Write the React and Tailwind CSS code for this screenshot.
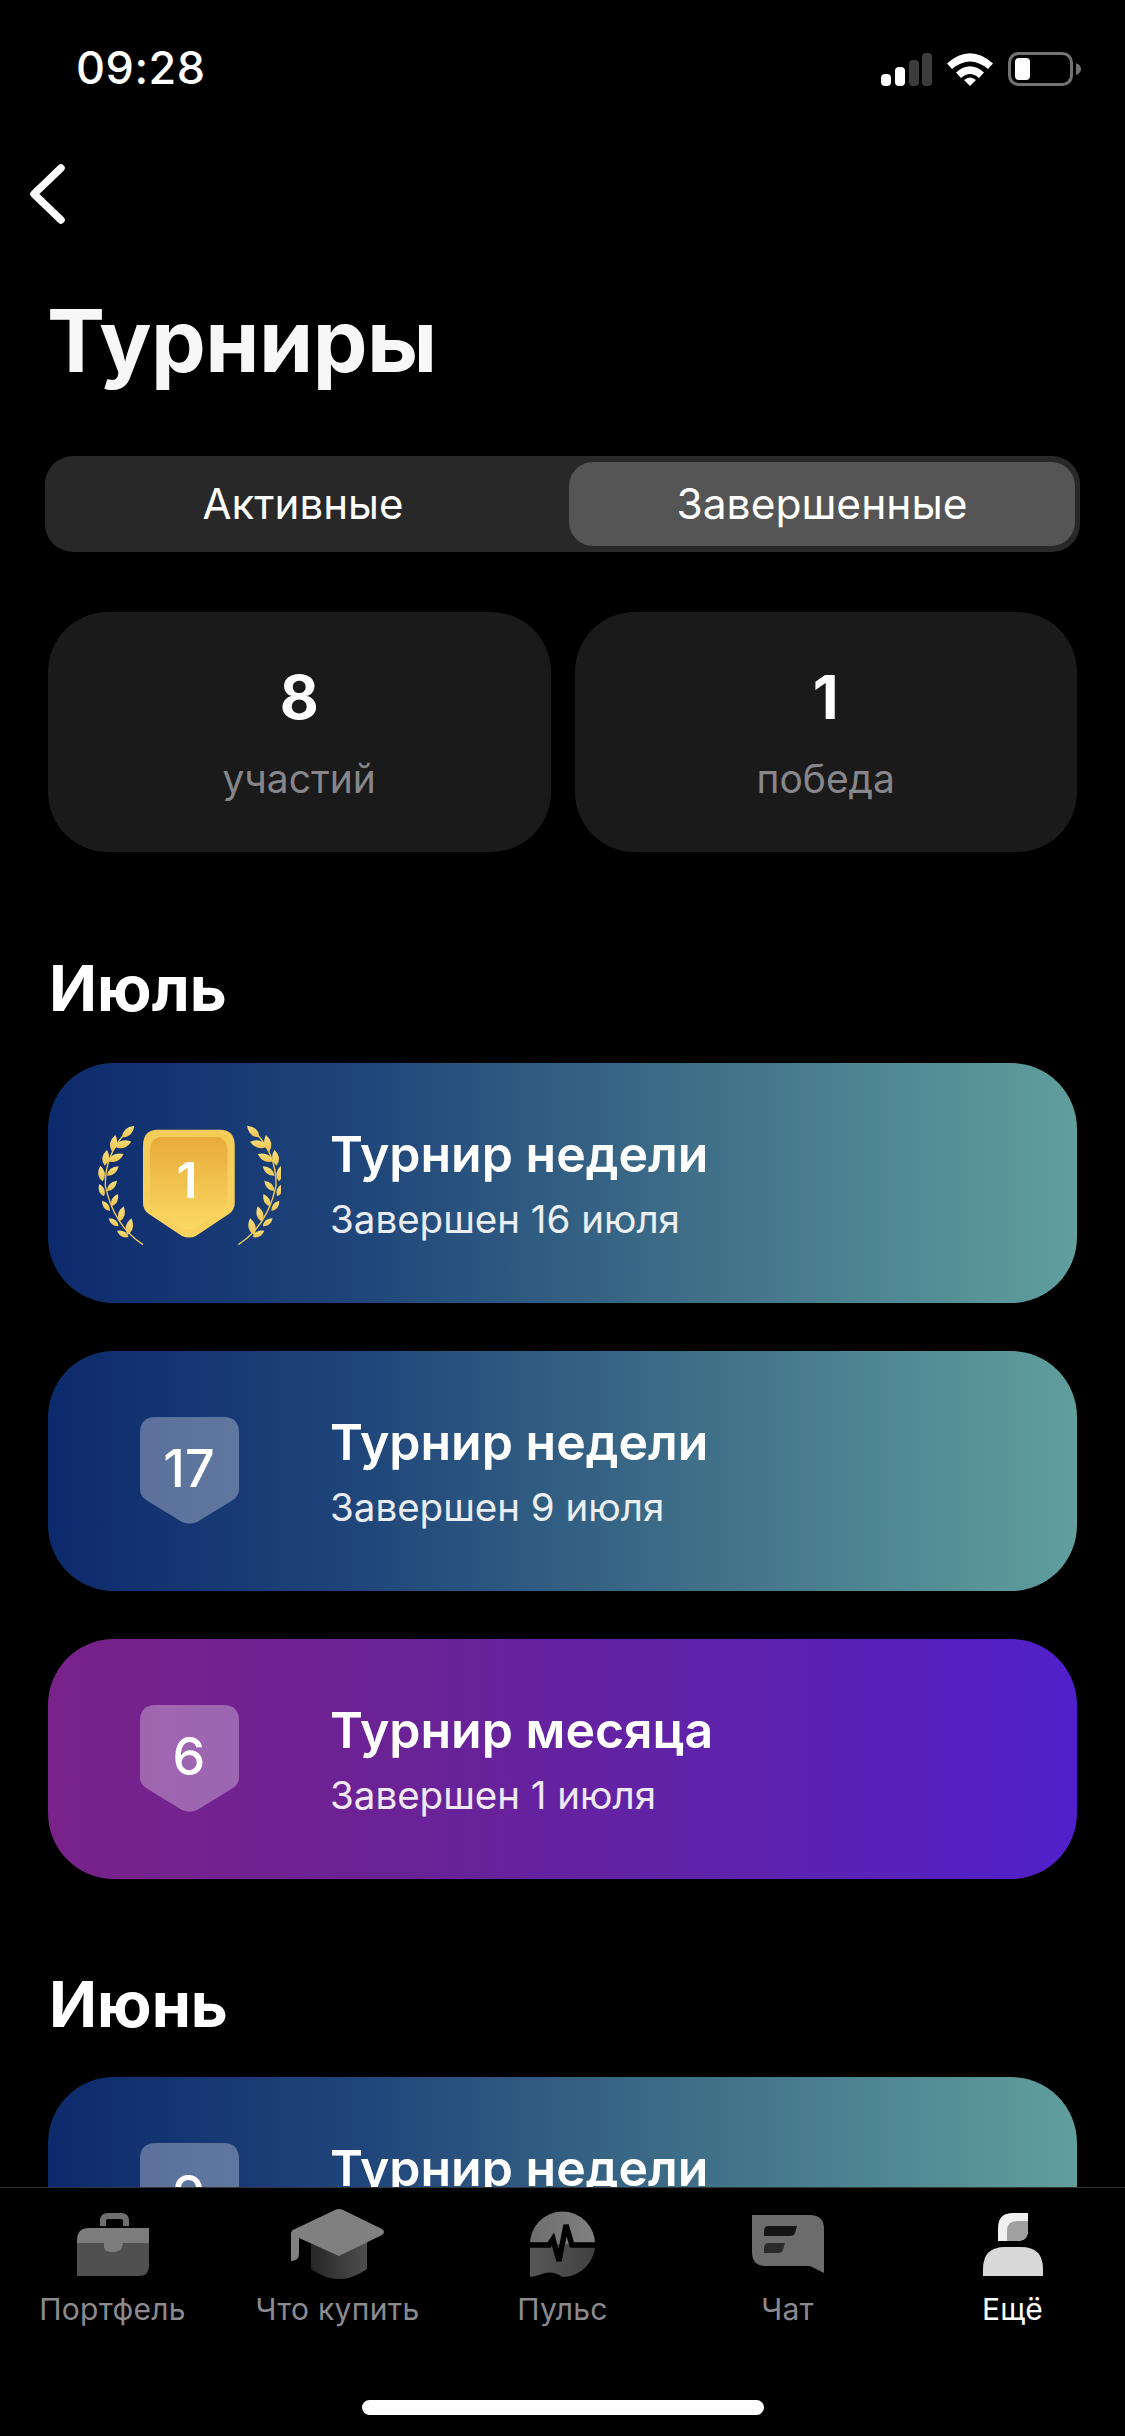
import React from 'react'

const font = "font-['Inter','Noto_Sans',sans-serif]"

const SHIELD = 'M16 0H83Q99 0 99 16V72Q99 79 93 83L57 105Q50 108 42 105L6 83Q0 79 0 72V16Q0 0 16 0Z'

const leafPath = ([x1, y1, x2, y2]) => {
  const dx = x2 - x1
  const dy = y2 - y1
  const nx = -dy * 0.42
  const ny = dx * 0.42
  const mx = x1 + dx * 0.45
  const my = y1 + dy * 0.45
  return `M${x1} ${y1}Q${mx + nx} ${my + ny} ${x2} ${y2}Q${mx - nx} ${my - ny} ${x1} ${y1}Z`
}

const LEAVES = [
  [120, 75, 157, 40],
  [90, 118, 100, 68],
  [98, 103, 148, 88],
  [68, 160, 75, 112],
  [78, 147, 125, 125],
  [62, 207, 55, 160],
  [75, 190, 110, 162],
  [66, 252, 52, 215],
  [75, 236, 105, 205],
  [84, 296, 60, 265],
  [88, 282, 108, 245],
  [110, 342, 80, 318],
  [112, 328, 125, 282],
  [140, 374, 105, 355],
  [136, 368, 148, 318],
]

const Branch = () => (
  <g>
    <path d="M183 397Q95 340 70 220Q68 130 130 62" fill="none" stroke="#f1c95c" strokeWidth="4" />
    {LEAVES.map((l, i) => (
      <path key={i} d={leafPath(l)} fill="url(#leaf)" />
    ))}
  </g>
)

const GoldBadge = () => (
  <div className="w-[184px] h-[122px] mt-[6px] grid place-items-center">
    <svg className="col-start-1 row-start-1 w-[184px] h-[122px]" viewBox="45 38 552 366">
      <defs>
        <linearGradient id="leaf" x1="0" y1="0" x2="0" y2="1">
          <stop offset="0" stopColor="#f6de7e" />
          <stop offset="1" stopColor="#efc552" />
        </linearGradient>
        <linearGradient id="goldOuter" x1="0" y1="0" x2="0" y2="1">
          <stop offset="0" stopColor="#f4cc58" />
          <stop offset="1" stopColor="#f9d25f" />
        </linearGradient>
        <linearGradient id="goldInner" x1="0" y1="0" x2="0" y2="1">
          <stop offset="0" stopColor="#e8ab39" />
          <stop offset="1" stopColor="#fbd965" />
        </linearGradient>
      </defs>
      <Branch />
      <g transform="translate(652 0) scale(-1 1)">
        <Branch />
      </g>
      <g transform="translate(183 52) scale(2.78 3.04)">
        <path d={SHIELD} fill="url(#goldOuter)" />
      </g>
      <g transform="translate(204 74) scale(2.35 2.6)">
        <path d={SHIELD} fill="url(#goldInner)" />
      </g>
    </svg>
    <span className="col-start-1 row-start-1 text-[50px] leading-none font-semibold text-white -mt-3 -ml-1">1</span>
  </div>
)

const PlainBadge = ({ n }) => (
  <div className="w-[184px] h-[108px] grid place-items-center">
    <svg className="col-start-1 row-start-1 w-[99px] h-[108px]" viewBox="0 0 99 108">
      <path d={SHIELD} fill="#fff" fillOpacity="0.31" />
    </svg>
    <span className="col-start-1 row-start-1 text-[52px] leading-none font-medium text-white -mt-[4px]">{n}</span>
  </div>
)

const TournamentCard = ({ title, sub, purple, badge }) => (
  <div
    className={`h-[240px] shrink-0 rounded-[66px] flex items-center pl-[49px] ${
      purple
        ? 'bg-[linear-gradient(90deg,#79228a_0%,#6a2296_35%,#5f22aa_65%,#5120cb_100%)]'
        : 'bg-[linear-gradient(90deg,#0d2a6c_0%,#1f457a_30%,#3c6b87_60%,#609f9d_100%)]'
    }`}
  >
    {badge}
    <div className="ml-[49px] flex flex-col">
      <span className="text-[50px] leading-[60px] font-semibold text-white">{title}</span>
      <span className="text-[38.5px] leading-[46px] text-white/90 mt-[12px]">{sub}</span>
    </div>
  </div>
)

const Briefcase = () => (
  <svg width="72" height="63" viewBox="0 0 72 63">
    <path d="M26 13V8Q26 3 31 3H44Q49 3 49 8V13" fill="none" stroke="#6e6e6e" strokeWidth="6" />
    <path d="M12 15H72V30H0V27Q0 15 12 15Z" fill="#7c7c7c" />
    <path d="M0 30H27V34Q27 39 33 39H38Q46 39 46 30H72V53Q72 63 62 63H0Z" fill="#505050" />
    <path d="M27 30H46Q46 39 38 39H33Q27 39 27 34Z" fill="#7c7c7c" />
  </svg>
)

const Hat = () => (
  <svg width="94" height="70" viewBox="0 0 94 70">
    <defs>
      <linearGradient id="hatBowl" x1="0" y1="0" x2="1" y2="0">
        <stop offset="0" stopColor="#262626" />
        <stop offset="1" stopColor="#4e4e4e" />
      </linearGradient>
    </defs>
    <path d="M20 30H76V60Q62 70 48 70Q34 70 20 60Z" fill="url(#hatBowl)" />
    <path d="M44 1Q48 -1 52 1L91 20Q95 23 91 26L48 47L8 29V45Q8 52 0 52V25Q0 21 4 20Z" fill="#808080" />
  </svg>
)

const Pulse = () => (
  <svg width="65" height="66" viewBox="0 0 65 66">
    <defs>
      <linearGradient id="pulseTop" x1="0" y1="0" x2="1" y2="0">
        <stop offset="0" stopColor="#6e6e6e" />
        <stop offset="1" stopColor="#808080" />
      </linearGradient>
      <linearGradient id="pulseBottom" x1="0" y1="0" x2="1" y2="0">
        <stop offset="0" stopColor="#585858" />
        <stop offset="1" stopColor="#404040" />
      </linearGradient>
    </defs>
    <path d="M0 33A32.5 32.5 0 0 1 65 33Z" fill="url(#pulseTop)" />
    <path d="M0 33H65A32.5 32.5 0 0 1 32.5 66Q24 60 15 62Q7 65 0 66Z" fill="url(#pulseBottom)" />
    <path d="M-2 34H19L23 28L29 50L36 14L42 34H67" fill="none" stroke="#000" strokeWidth="5.5" />
  </svg>
)

const Chat = () => (
  <svg width="72" height="58" viewBox="0 0 72 58">
    <path d="M0 0H58Q72 0 72 14V58Q66 55 58 51H14Q0 51 0 37Z" fill="#6c6c6c" />
    <path d="M17 11H45L43 18Q42 21 38 21H12V16Q12 11 17 11Z" fill="#141414" />
    <path d="M17 28H33L31 35Q30 38 26 38H12V33Q12 28 17 28Z" fill="#2b2b2b" />
  </svg>
)

const More = () => (
  <svg width="60" height="63" viewBox="0 0 60 63">
    <path d="M30 0H45V17Q45 28 34 28H15V15Q15 0 30 0Z" fill="#f0f0f0" />
    <path d="M34 8H45V17Q45 28 34 28H24V18Q24 8 34 8Z" fill="#a0a0a0" />
    <path d="M22 34H38Q60 34 60 56V63H0V56Q0 34 22 34Z" fill="#d8d8d8" />
  </svg>
)

const NavItem = ({ icon, label, active }) => (
  <div className="flex-1 flex flex-col items-center">
    <div className="h-[72px] flex items-center justify-center">{icon}</div>
    <span className={`mt-[11px] text-[30px] leading-[36px] tracking-[0.3px] ${active ? 'text-white' : 'text-[#8b8b8f]'}`}>
      {label}
    </span>
  </div>
)

const StatCard = ({ value, label }) => (
  <div className="flex-1 h-[240px] rounded-[60px] bg-[#1a1a1a] flex flex-col items-center">
    <span className="mt-[50px] text-[60px] leading-[70px] font-bold text-white">{value}</span>
    <span className="mt-[24px] text-[39px] leading-[46px] text-[#87878b]">{label}</span>
  </div>
)

export default function App() {
  return (
    <div className={`w-[1125px] h-[2436px] bg-black overflow-hidden flex flex-col text-white ${font}`}>
      <div className="flex-1 min-h-0 overflow-hidden flex flex-col">
        {/* status bar */}
        <div className="h-[136px] shrink-0 flex justify-between pl-[76px] pr-[43px] pt-[40px]">
          <span className="text-[45px] leading-[56px] font-medium tracking-[0.5px]">09:28</span>
          <div className="flex items-center gap-[15px] h-[34px] mt-[12px]">
            <svg width="51" height="33" viewBox="0 0 51 33">
              <rect x="0" y="21" width="10" height="12" rx="4" fill="#fff" />
              <rect x="14" y="14" width="10" height="19" rx="4" fill="#fff" />
              <rect x="28" y="7" width="10" height="26" rx="4" fill="#3c3c3c" />
              <rect x="41" y="0" width="10" height="33" rx="4" fill="#3c3c3c" />
            </svg>
            <svg width="46" height="34" viewBox="0 0 46 34">
              <path d="M0 11.5Q23 -9 46 11.5L41 17Q23 2 5 17Z" fill="#fff" />
              <path d="M9 20.5Q23 8 37 20.5L32 26Q23 18 14 26Z" fill="#fff" />
              <path d="M17 28Q23 23 29 28L23 34Z" fill="#fff" />
            </svg>
            <svg width="74" height="34" viewBox="0 0 74 34">
              <rect x="1.5" y="1.5" width="62" height="31" rx="9" fill="none" stroke="#737373" strokeWidth="3" />
              <rect x="7" y="6" width="15" height="22" rx="4" fill="#fff" />
              <path d="M68 11Q73 13 73 17Q73 21 68 23Z" fill="#737373" />
            </svg>
          </div>
        </div>

        {/* back */}
        <div className="h-[86px] shrink-0 pl-[28px] flex items-start pt-[27px]">
          <svg width="38" height="62" viewBox="0 0 38 62">
            <path d="M33 5L6 31L33 57" fill="none" stroke="#fff" strokeWidth="7.5" strokeLinecap="round" strokeLinejoin="round" />
          </svg>
        </div>

        <div className="h-[234px] shrink-0 pl-[47px] pt-[69px]">
          <h1 className="text-[87px] leading-[100px] font-bold tracking-[-0.5px] text-[#f7f7f7]">Турниры</h1>
        </div>

        <div className="px-[45px] shrink-0">
          <div className="h-[96px] rounded-[28px] bg-[#282828] flex items-center p-[6px] pr-[5px]">
            <div className="flex-1 pr-[14px] text-center text-[42px] leading-[46px]">Активные</div>
            <div className="w-[506px] h-[84px] rounded-[24px] bg-[#555555] flex items-center justify-center text-[42.5px]">
              Завершенные
            </div>
          </div>
        </div>

        <div className="mt-[60px] px-[48px] shrink-0 flex gap-[24px]">
          <StatCard value="8" label="участий" />
          <StatCard value="1" label="победа" />
        </div>

        <h2 className="mt-[96px] pl-[49px] shrink-0 text-[63px] leading-[80px] font-bold">Июль</h2>

        <div className="mt-[35px] px-[48px] flex flex-col gap-[48px] shrink-0">
          <TournamentCard title="Турнир недели" sub="Завершен 16 июля" badge={<GoldBadge />} />
          <TournamentCard title="Турнир недели" sub="Завершен 9 июля" badge={<PlainBadge n="17" />} />
          <TournamentCard title="Турнир месяца" sub="Завершен 1 июля" purple badge={<PlainBadge n="6" />} />
        </div>

        <h2 className="mt-[85px] pl-[49px] shrink-0 text-[63px] leading-[80px] font-bold">Июнь</h2>

        <div className="mt-[33px] px-[48px] shrink-0">
          <TournamentCard title="Турнир недели" sub="Завершен 24 июня" badge={<PlainBadge n="9" />} />
        </div>
      </div>

      {/* tab bar */}
      <div className="h-[249px] shrink-0 border-t border-[#333333] bg-black flex flex-col">
        <div className="flex pt-[20px]">
          <NavItem icon={<Briefcase />} label="Портфель" />
          <NavItem icon={<Hat />} label="Что купить" />
          <NavItem icon={<Pulse />} label="Пульс" />
          <NavItem icon={<Chat />} label="Чат" />
          <NavItem icon={<More />} label="Ещё" active />
        </div>
        <div className="mt-[73px] mx-auto w-[402px] h-[15px] rounded-full bg-white" />
      </div>
    </div>
  )
}
